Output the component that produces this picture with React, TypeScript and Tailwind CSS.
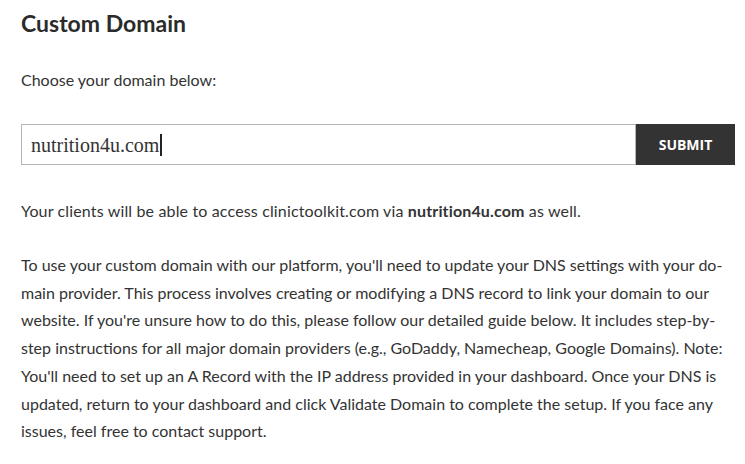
import { useState } from 'react'

const lines = [
  "To use your custom domain with our platform, you'll need to update your DNS settings with your do-",
  'main provider. This process involves creating or modifying a DNS record to link your domain to our',
  "website. If you're unsure how to do this, please follow our detailed guide below. It includes step-by-",
  'step instructions for all major domain providers (e.g., GoDaddy, Namecheap, Google Domains). Note:',
  "You'll need to set up an A Record with the IP address provided in your dashboard. Once your DNS is",
  'updated, return to your dashboard and click Validate Domain to complete the setup. If you face any',
  'issues, feel free to contact support.',
]

export default function App() {
  const [domain] = useState('nutrition4u.com')

  return (
    <div className="min-h-[464px] w-[745px] bg-white px-[21px] text-[#333] font-['Lato','Liberation_Sans',sans-serif]">
      <h1 className="pt-[9px] text-[23px] font-bold leading-[28px] text-[#2b2b2b]">Custom Domain</h1>

      <p className="mt-[32px] text-[16px] leading-[22px]">Choose your domain below:</p>

      <div className="mt-[33px] flex h-[41px] w-[714px]">
        <div className="flex flex-1 items-center border border-[#b5b5b5] pl-[9px] font-['Liberation_Serif',serif] text-[20px] text-[#333]">
          <span>{domain}</span>
          <span className="ml-px h-[22px] w-[2px] bg-[#222]" />
        </div>
        <button className="w-[99px] bg-[#333] text-[14px] font-bold text-white font-['Open_Sans',sans-serif]">
          SUBMIT
        </button>
      </div>

      <p className="mt-[35px] text-[16px] leading-[22px] tracking-[0.15px]">
        Your clients will be able to access clinictoolkit.com via <b>nutrition4u.com</b> as well.
      </p>

      <p className="mt-[29px] whitespace-nowrap text-[16px] leading-[27.7px]">
        {lines.map((l, i) => (
          <span key={i} className="block">
            {l}
          </span>
        ))}
      </p>
    </div>
  )
}
